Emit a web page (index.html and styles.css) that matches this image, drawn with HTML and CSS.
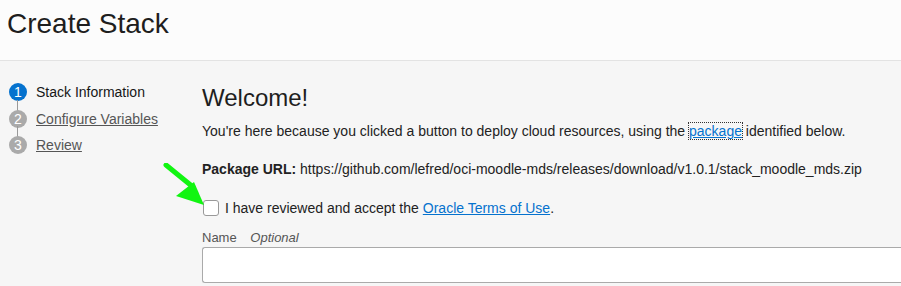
FILE: index.html
```html
<!DOCTYPE html>
<html lang="en">
<head>
    <meta charset="UTF-8">
    <title>Create Stack</title>
    <link rel="stylesheet" href="styles.css">
</head>
<body>

    <!-- Naslov stranice -->
    <div class="page-header">
        <h1>Create Stack</h1>
    </div>

    <div class="page-body">
        <!-- Koraci -->
        <ul class="steps">
            <li class="step active"><span class="step-num">1</span><span class="step-label">Stack Information</span></li>
            <li class="step"><span class="step-num">2</span><a href="#" class="step-label">Configure Variables</a></li>
            <li class="step"><span class="step-num">3</span><a href="#" class="step-label">Review</a></li>
        </ul>

        <!-- Glavni sadrzaj -->
        <div class="main">
            <h2>Welcome!</h2>
            <p class="intro">You're here because you clicked a button to deploy cloud resources, using the <a href="#" class="pkg-link">package</a> identified below.</p>
            <p class="pkg-url"><b>Package URL:</b> https://github.com/lefred/oci-moodle-mds/releases/download/v1.0.1/stack_moodle_mds.zip</p>

            <label class="terms">
                <span class="checkbox"></span>
                I have reviewed and accept the <a href="#">Oracle Terms of Use</a>.
            </label>

            <div class="field">
                <div class="field-label">Name <i>Optional</i></div>
                <div class="text-input"></div>
            </div>

            <svg class="arrow" width="50" height="42" viewBox="0 0 50 42">
                <line x1="3" y1="2" x2="30" y2="24" stroke="#11f511" stroke-width="5" stroke-linecap="round"/>
                <polygon points="13,33 31,19 41,42" fill="#11f511"/>
            </svg>
        </div>
    </div>

</body>
</html>
```

FILE: styles.css
```css
body {
    margin: 0;
    background-color: #f6f6f6;
    color: #222;
    font-family: "Liberation Sans", Arial, sans-serif;
    font-size: 14px;
    overflow: hidden;
}

a {
    color: #0572ce;
}

.page-header {
    background-color: #fcfcfc;
    border-bottom: 1px solid #e3e3e3;
    height: 60px;
    padding-left: 7px;
}

.page-header h1 {
    margin: 0;
    padding-top: 8px;
    font-size: 28px;
    font-weight: normal;
    color: #1e1e1e;
}

.page-body {
    display: flex;
}

/* Koraci */
.steps {
    list-style: none;
    margin: 0;
    padding: 18px 0 0 9px;
    width: 193px;
    flex-shrink: 0;
}

.step {
    display: flex;
    align-items: center;
    height: 26.5px;
    position: relative;
}

.step + .step::before {
    content: "";
    position: absolute;
    left: 8px;
    top: -6px;
    width: 1px;
    height: 12px;
    background-color: #999;
}

.step-num {
    width: 18px;
    height: 18px;
    border-radius: 50%;
    background-color: #aaa;
    color: #fff;
    font-size: 14px;
    line-height: 18px;
    text-align: center;
    margin-right: 9px;
    position: relative;
}

.step.active .step-num {
    background-color: #0572ce;
}

.step-label {
    color: #555;
}

.step.active .step-label {
    color: #161616;
}

/* Glavni sadrzaj */
.main {
    flex: 1;
    position: relative;
    padding-top: 23px;
}

.main h2 {
    margin: 0;
    font-size: 24px;
    font-weight: normal;
    color: #1e1e1e;
}

.intro {
    margin: 11px 0 0 0;
}

.pkg-link {
    outline: 1px dotted #333;
}

.pkg-url {
    margin: 22px 0 0 0;
}

.terms {
    display: flex;
    align-items: center;
    margin-top: 23px;
}

.checkbox {
    width: 14px;
    height: 14px;
    border: 1px solid #999;
    border-radius: 3px;
    background-color: #fff;
    margin-left: 1px;
    margin-right: 6px;
}

.terms a {
    margin-left: 4px;
}

.field {
    margin-top: 14px;
}

.field-label {
    font-size: 13px;
    color: #555;
}

.field-label i {
    margin-left: 10px;
}

.text-input {
    margin-top: 2px;
    height: 34px;
    border: 1px solid #aaa;
    border-right: none;
    border-radius: 3px 0 0 3px;
    background-color: #fff;
}

.arrow {
    position: absolute;
    left: -39px;
    top: 102px;
}
```
